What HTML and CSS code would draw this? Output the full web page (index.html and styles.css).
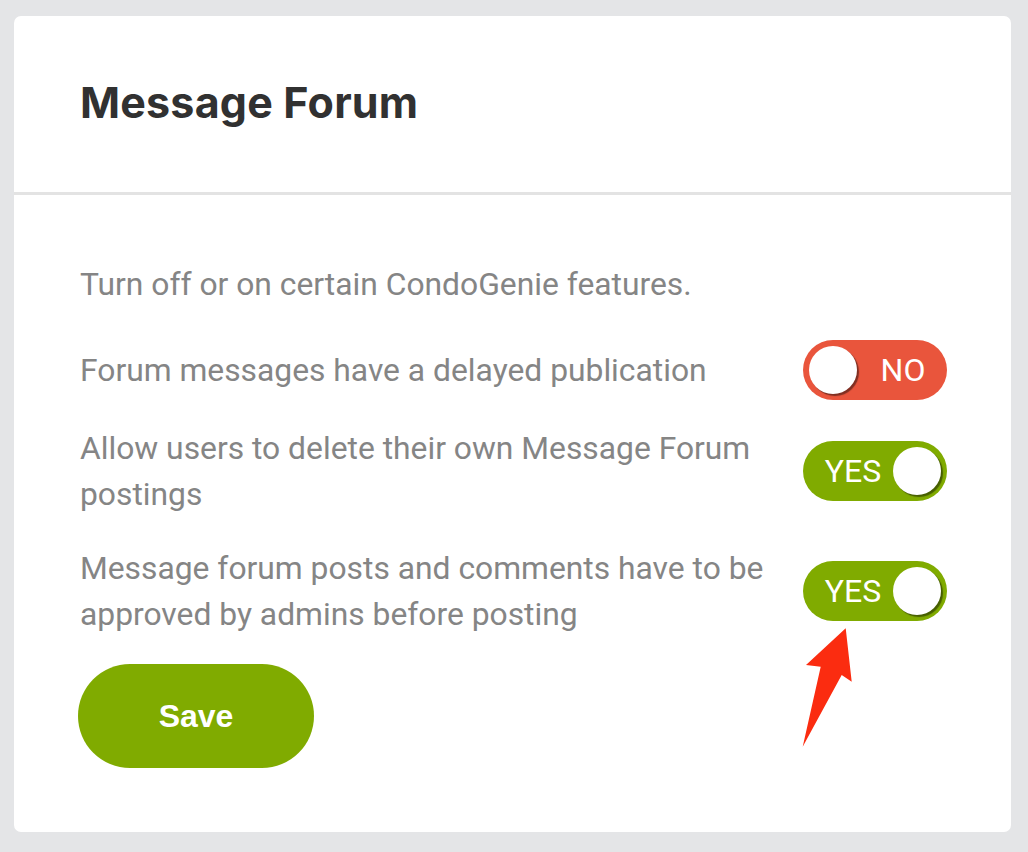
FILE: index.html
```html
<!DOCTYPE html>
<html lang="en">
<head>
<meta charset="utf-8">
<title>Message Forum</title>
<link rel="stylesheet" href="styles.css">
</head>
<body>
<div class="card">
  <div class="card-header">
    <h1 class="title">Message Forum</h1>
  </div>
  <div class="card-body">
    <p class="intro">Turn off or on certain CondoGenie features.</p>
    <div class="rows">
      <div class="row">
        <div class="label">Forum messages have a delayed publication</div>
        <div class="toggle off"><span class="knob"></span><span class="tlabel">NO</span></div>
      </div>
      <div class="row">
        <div class="label">Allow users to delete their own Message Forum postings</div>
        <div class="toggle on"><span class="tlabel">YES</span><span class="knob"></span></div>
      </div>
      <div class="row row-spaced">
        <div class="label">Message forum posts and comments have to be approved by admins before posting</div>
        <div class="toggle on"><span class="tlabel">YES</span><span class="knob"></span></div>
      </div>
    </div>
    <button class="save">Save</button>
  </div>
  <svg class="arrow" width="120" height="140" viewBox="0 0 120 140">
    <polygon points="65.7,8.3 26,45 40.7,46.7 22.7,126.7 61.7,55 71.7,61.7" fill="#fb2c10"/>
  </svg>
</div>
</body>
</html>
```
FILE: styles.css
```css
* { box-sizing: border-box; }
html, body { margin: 0; padding: 0; }
body {
  background: #e4e5e7;
  padding: 16px 17px 20px 14px;
  font-family: Roboto, "Liberation Sans", sans-serif;
}
.card {
  position: relative;
  background: #fff;
  border-radius: 7px;
  height: 816px;
  display: flex;
  flex-direction: column;
}
.card-header {
  height: 179px;
  border-bottom: 3px solid #e3e3e3;
  padding: 0 66px;
  display: flex;
  align-items: center;
}
.title {
  margin: 0;
  margin-top: -4px;
  font-family: Inter, "Liberation Sans", sans-serif;
  font-weight: 700;
  font-size: 43px;
  color: #313131;
  letter-spacing: 0.2px;
}
.card-body {
  padding: 66px 64px 0 66px;
  color: #858585;
  font-size: 31.8px;
  line-height: 46px;
}
.intro { margin: 0 0 33px 0; }
.rows { display: flex; flex-direction: column; gap: 25px; }
.row {
  display: flex;
  align-items: center;
  justify-content: space-between;
  gap: 20px;
  min-height: 60px;
}
.row-spaced { margin-top: 3px; }
.label { flex: 1; max-width: 705px; }
.toggle {
  width: 144px;
  height: 60px;
  border-radius: 30px;
  display: flex;
  align-items: center;
  padding: 0 6px;
  color: #fff;
  font-size: 32px;
  line-height: 1;
  flex-shrink: 0;
}
.toggle.off { background: #e9553c; }
.toggle.on { background: #80ab00; }
.knob {
  width: 48px;
  height: 48px;
  border-radius: 50%;
  background: #fff;
  box-shadow: 2px 2px 1px rgba(0,0,0,0.45);
  flex-shrink: 0;
}
.tlabel { flex: 1; text-align: center; }
.toggle.off .tlabel { padding-left: 8px; }
.toggle.on .tlabel { padding-left: 4px; }
.save {
  margin-top: 27px;
  width: 236px;
  height: 104px;
  border: none;
  border-radius: 52px;
  background: #80ab00;
  color: #fff;
  font-family: "Liberation Sans", Arial, sans-serif;
  font-weight: 700;
  font-size: 32px;
  margin-left: -2px;
}
.arrow {
  position: absolute;
  left: 766px;
  top: 604px;
}
```
